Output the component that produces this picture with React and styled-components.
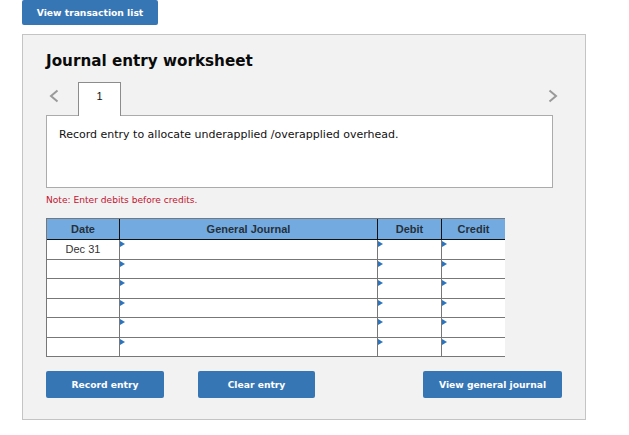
import React from 'react'
import styled, { createGlobalStyle } from 'styled-components'

const GlobalStyle = createGlobalStyle`
  html, body {
    margin: 0;
    padding: 0;
    background: #fff;
    font-family: "DejaVu Sans", Verdana, sans-serif;
  }
`

const Page = styled.div`
  width: 629px;
  height: 435px;
  padding-left: 22px;
  box-sizing: border-box;
  overflow: hidden;
`

const Button = styled.button`
  display: block;
  width: ${props => props.$width}px;
  height: ${props => props.$height || 27}px;
  padding: 0;
  border: 0;
  border-radius: 2px;
  background: #3776b5;
  color: #fff;
  font-family: "DejaVu Sans", Verdana, sans-serif;
  font-size: 9.2px;
  font-weight: 700;
  text-align: center;
`

const Panel = styled.div`
  width: 564px;
  height: 386px;
  margin-top: 9px;
  padding: 0 23px;
  box-sizing: border-box;
  background: #f2f2f2;
  border: 1px solid #c4c4c4;
`

const Title = styled.h1`
  margin: 0;
  padding-top: 16px;
  height: 47px;
  box-sizing: border-box;
  font-size: 15.2px;
  line-height: 21px;
  font-weight: 700;
  color: #0a0a0a;
`

const TabRow = styled.div`
  display: flex;
  align-items: flex-start;
  height: 33px;
  position: relative;
  z-index: 1;
`

const Arrow = styled.svg`
  display: block;
  width: 10px;
  height: 14px;
  flex: none;
  margin-top: 7px;
`

const PrevArrow = styled(Arrow)`
  margin-left: 3px;
`

const NextArrow = styled(Arrow)`
  margin-right: 4px;
`

const Tab = styled.div`
  width: 43px;
  height: 34px;
  margin-left: 19px;
  margin-right: auto;
  box-sizing: border-box;
  background: #fff;
  border: 1px solid #8c8c8c;
  border-bottom: 0;
  font-family: "Liberation Sans", Arial, sans-serif;
  font-size: 11px;
  line-height: 27px;
  text-align: center;
  color: #111;
`

const Prompt = styled.div`
  width: 507px;
  height: 73px;
  padding: 12px;
  box-sizing: border-box;
  background: #fff;
  border: 1px solid #ababab;
  font-size: 11px;
  line-height: 14px;
  color: #111;
`

const Note = styled.p`
  margin: 0;
  height: 30px;
  padding-top: 6px;
  box-sizing: border-box;
  font-size: 9.1px;
  line-height: 12px;
  color: #c41230;
`

const Sheet = styled.table`
  width: 459px;
  table-layout: fixed;
  border-collapse: separate;
  border-spacing: 0;
  background: #fff;
  border-top: 1px solid #777;
  border-left: 1px solid #777;
  font-family: "Liberation Sans", Arial, sans-serif;
  font-size: 11px;
  color: #333;
`

const HeadCell = styled.th`
  height: 21px;
  padding: 0;
  box-sizing: border-box;
  background: #73abe0;
  border-bottom: 1px solid #111;
  border-left: ${props => (props.$first ? '0' : '1px solid #111')};
  font-weight: 700;
  font-size: 11px;
  color: #26303a;
  text-align: center;
`

const Cell = styled.td`
  position: relative;
  height: ${props => props.$height}px;
  padding: 0 0 2px;
  box-sizing: border-box;
  border-bottom: 1px solid #777;
  border-left: ${props => (props.$first ? '0' : '1px solid #777')};
  text-align: center;
  vertical-align: middle;
`

const Marker = styled.i`
  position: absolute;
  top: 1px;
  left: 0;
  width: 0;
  height: 0;
  border-style: solid;
  border-width: 3.5px 0 3.5px 5px;
  border-color: transparent transparent transparent #2d74bd;
`

const Actions = styled.div`
  display: flex;
  gap: 34px;
  width: 516px;
  margin-top: 14px;

  & > :last-child {
    margin-left: auto;
  }
`

const rowHeights = [20, 19, 20, 19, 20, 19]

const Chevron = ({ direction }) => (
  direction === 'left'
    ? <PrevArrow viewBox="0 0 10 14"><path d="M8.5 1.5 2 7l6.5 5.5" fill="none" stroke="#999" strokeWidth="2" /></PrevArrow>
    : <NextArrow viewBox="0 0 10 14"><path d="M1.5 1.5 8 7l-6.5 5.5" fill="none" stroke="#999" strokeWidth="2" /></NextArrow>
)

const App = () => (
  <Page>
    <GlobalStyle />
    <Button $width={136} $height={25}>View transaction list</Button>
    <Panel>
      <Title>Journal entry worksheet</Title>
      <TabRow>
        <Chevron direction="left" />
        <Tab>1</Tab>
        <Chevron direction="right" />
      </TabRow>
      <Prompt>Record entry to allocate underapplied /overapplied overhead.</Prompt>
      <Note>Note: Enter debits before credits.</Note>
      <Sheet>
        <colgroup>
          <col width="72" />
          <col width="258" />
          <col width="64" />
          <col width="64" />
        </colgroup>
        <thead>
          <tr>
            <HeadCell $first>Date</HeadCell>
            <HeadCell>General Journal</HeadCell>
            <HeadCell>Debit</HeadCell>
            <HeadCell>Credit</HeadCell>
          </tr>
        </thead>
        <tbody>
          {rowHeights.map((height, i) => (
            <tr key={i}>
              <Cell $first $height={height}>{i === 0 ? 'Dec 31' : ''}</Cell>
              <Cell $height={height}><Marker /></Cell>
              <Cell $height={height}><Marker /></Cell>
              <Cell $height={height}><Marker /></Cell>
            </tr>
          ))}
        </tbody>
      </Sheet>
      <Actions>
        <Button $width={118}>Record entry</Button>
        <Button $width={117}>Clear entry</Button>
        <Button $width={139}>View general journal</Button>
      </Actions>
    </Panel>
  </Page>
)

export default App
